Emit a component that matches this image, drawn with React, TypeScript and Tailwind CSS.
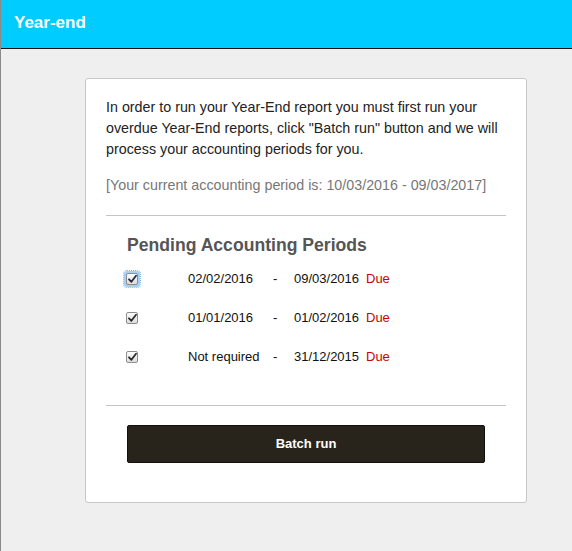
import React from "react";

function Check({ focus }: { focus?: boolean }) {
  return (
    <span
      className={
        "inline-flex items-center justify-center rounded-[3px] " +
        (focus ? "p-[2px] bg-[#a9cff3] outline outline-1 outline-dotted outline-[#7fb4ea]" : "p-[2px]")
      }
    >
      <span className="flex h-[12px] w-[12px] items-center justify-center rounded-[2px] border border-[#8e8e8e] bg-gradient-to-b from-[#fdfdfd] to-[#dcdcdc]">
        <svg width="9" height="8" viewBox="0 0 9 8">
          <path d="M1 4.3 L3.4 6.8 L8 0.8" fill="none" stroke="#2b2b2b" strokeWidth="1.8" strokeLinecap="round" strokeLinejoin="round" />
        </svg>
      </span>
    </span>
  );
}

const rows = [
  { from: "02/02/2016", to: "09/03/2016", focus: true },
  { from: "01/01/2016", to: "01/02/2016" },
  { from: "Not required", to: "31/12/2015" },
];

export default function App() {
  return (
    <div
      className="min-h-[551px] bg-[#efefef] border-l border-[#8a8a8a]"
      style={{ fontFamily: '"Liberation Sans", Arial, Helvetica, sans-serif' }}
    >
      <div className="flex h-[49px] items-center border-b border-[#111] bg-[#00ccff] pl-[13px] pb-[3px]">
        <span className="text-[17px] font-bold text-white">Year-end</span>
      </div>
      <div className="pl-[84px] pt-[29px]">
        <div className="w-[442px] rounded-[3px] border border-[#c8c8c8] bg-white px-[20px] pt-[18px] pb-[39px]">
          <p className="text-[14.3px] leading-[21px] text-[#222]">
            In order to run your Year-End report you must first run your overdue Year-End reports, click "Batch run" button and we will process your accounting periods for you.
          </p>
          <p className="mt-[15px] text-[14.3px] leading-[21px] text-[#777]">
            [Your current accounting period is: 10/03/2016 - 09/03/2017]
          </p>
          <div className="mt-[19px] h-px bg-[#c4c4c4]" />
          <div className="pl-[21px] pt-[18px]">
            <h2 className="text-[17.6px] font-bold leading-[22px] text-[#555]">Pending Accounting Periods</h2>
            <div className="mt-[3px]">
              {rows.map((r, i) => (
                <div key={i} className="flex h-[39px] items-center text-[13px] text-[#111]">
                  <div className="ml-[-3px] w-[64px]">
                    <Check focus={r.focus} />
                  </div>
                  <div className="w-[85px]">{r.from}</div>
                  <div className="w-[21px]">-</div>
                  <div className="w-[72px]">{r.to}</div>
                  <div className="text-[#cc0000]">Due</div>
                </div>
              ))}
            </div>
          </div>
          <div className="mt-[29px] h-px bg-[#c4c4c4]" />
          <div className="px-[21px] pt-[19px]">
            <button className="flex h-[38px] w-full items-center justify-center rounded-[2px] border border-[#111] bg-[#28241c] text-[13px] font-bold text-white">
              Batch run
            </button>
          </div>
        </div>
      </div>
    </div>
  );
}
